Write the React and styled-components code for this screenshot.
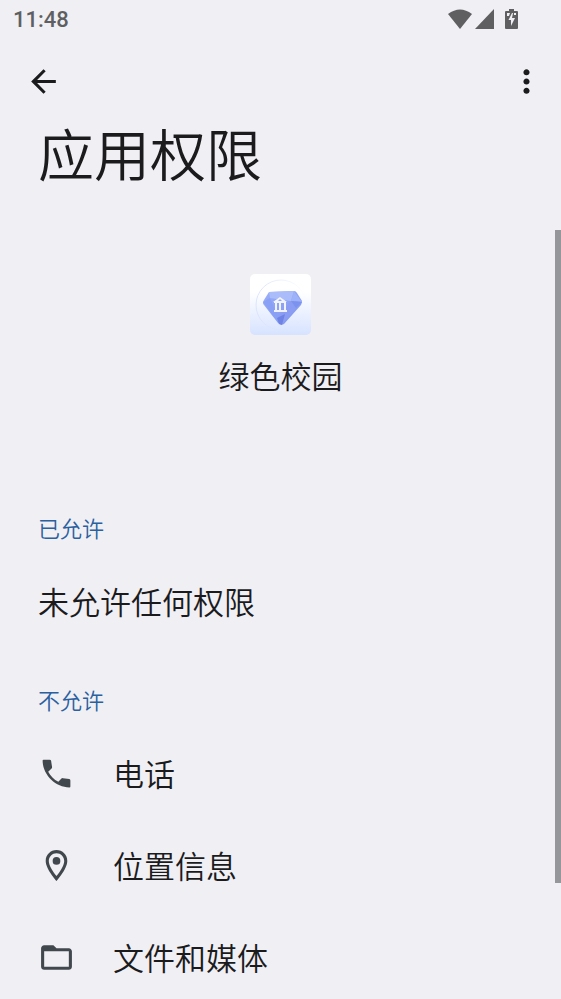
import React from "react";
import styled, { createGlobalStyle } from "styled-components";

const GlobalStyle = createGlobalStyle`
  * { box-sizing: border-box; }
  body {
    margin: 0;
    background: #f0eff4;
    color: #1b1b1d;
    font-family: "Noto Sans CJK SC", "Noto Sans", sans-serif;
    font-weight: 350;
  }
`;

const Screen = styled.div`
  position: relative;
  height: 100vh;
  display: flex;
  flex-direction: column;
  overflow: hidden;
`;

const StatusBar = styled.div`
  flex: none;
  display: flex;
  align-items: center;
  justify-content: space-between;
  height: 38px;
  padding: 0 43px 0 13px;
  color: #5f5f62;
`;

const Clock = styled.time`
  font: 500 22px/38px Roboto, sans-serif;
  padding-top: 2px;
`;

const StatusIcons = styled.div`
  display: flex;
  align-items: center;
  gap: 3px;

  svg { display: block; fill: currentColor; }
  svg:last-child { margin-left: 8px; }
`;

const Toolbar = styled.header`
  flex: none;
  display: flex;
  align-items: center;
  justify-content: space-between;
  height: 73px;
  padding: 13px 11px 0 19px;
`;

const IconButton = styled.button`
  display: grid;
  place-items: center;
  width: 48px;
  height: 48px;
  padding: 0;
  border: 0;
  border-radius: 50%;
  background: none;
  color: #1b1b1d;
  cursor: pointer;
`;

const Glyph = styled.svg`
  display: block;
  flex: none;
  width: 37px;
  height: 37px;
  fill: currentColor;
`;

const Content = styled.main`
  flex: 1;
  min-height: 0;
  overflow-y: auto;
  scrollbar-width: none;
`;

const Title = styled.h1`
  margin: 0;
  padding: 0 38px;
  font-size: 56px;
  line-height: 82px;
  font-weight: inherit;
`;

const AppHeader = styled.section`
  display: flex;
  flex-direction: column;
  align-items: center;
  gap: 20px;
  padding: 81px 38px 92px;
`;

const AppIcon = styled.svg`
  display: block;
  width: 61px;
  height: 61px;
`;

const AppName = styled.h2`
  margin: 0;
  font-size: 31px;
  line-height: 40px;
  font-weight: inherit;
`;

const SectionTitle = styled.h3`
  margin: 0;
  padding: 20px 38px 0;
  font-size: 22px;
  line-height: 40px;
  font-weight: inherit;
  color: #2a60a0;
`;

const Group = styled.section`
  padding-bottom: 12px;
`;

const List = styled.ul`
  margin: 0;
  padding: 8px 0 0;
  list-style: none;
`;

const Row = styled.li`
  display: flex;
  align-items: center;
  height: 92px;
`;

const Label = styled.span`
  padding: 0 38px;
  font-size: 31px;
  line-height: 40px;
`;

const RowButton = styled.button`
  display: flex;
  align-items: center;
  width: 100%;
  height: 100%;
  padding: 0 0 0 38px;
  border: 0;
  background: none;
  color: #1b1b1d;
  font-family: inherit;
  font-weight: inherit;
  text-align: left;
  cursor: pointer;

  ${Glyph} { color: #41484d; }
`;

const ScrollThumb = styled.div`
  position: absolute;
  top: 23%;
  right: 0;
  width: 6px;
  height: 65.4%;
  background: #949699;
`;

const paths = {
  back: "M20 11H7.83l5.59-5.59L12 4l-8 8 8 8 1.41-1.41L7.83 13H20v-2z",
  more: "M12 8c1.1 0 2-.9 2-2s-.9-2-2-2-2 .9-2 2 .9 2 2 2zm0 2c-1.1 0-2 .9-2 2s.9 2 2 2 2-.9 2-2-.9-2-2-2zm0 6c-1.1 0-2 .9-2 2s.9 2 2 2 2-.9 2-2-.9-2-2-2z",
  phone: "M3.6 3H7.500Q8.400 3 8.500 3.800L9.100 7.700Q9.200 8.400 8.800 8.700L6.620 10.800C8.060 13.600 10.400 15.900 13.200 17.400L15.200 15.300Q15.600 14.900 16.200 15L20.300 15.600Q21 15.700 21 16.500V20.400Q21 21 20.400 21C11.300 21 3 12.700 3 3.600Q3 3 3.600 3Z",
  place: "M12 2C8.13 2 5 5.13 5 9c0 5.25 7 13 7 13s7-7.75 7-13c0-3.87-3.13-7-7-7zM7 9c0-2.76 2.24-5 5-5s5 2.24 5 5c0 2.88-2.88 7.19-5 9.88C9.92 16.21 7 11.85 7 9zM12 6.5a2.5 2.5 0 1 0 0 5 2.5 2.5 0 0 0 0-5z",
  folder: "M20 6h-8l-2-2H4c-1.1 0-2 .9-2 2v12c0 1.1.9 2 2 2h16c1.1 0 2-.9 2-2V8c0-1.1-.9-2-2-2zm0 12H4V8h16v10z",
};

const Icon = ({ name }) => (
  <Glyph viewBox="0 0 24 24" aria-hidden="true">
    <path d={paths[name]} />
  </Glyph>
);

const DiamondIcon = () => (
  <AppIcon viewBox="0 0 61 61" role="img" aria-label="绿色校园">
    <defs>
      <linearGradient id="tile" x1="0" y1="0" x2="0" y2="1">
        <stop offset="0.3" stopColor="#ffffff" />
        <stop offset="1" stopColor="#d6e2ff" />
      </linearGradient>
      <linearGradient id="ring" x1="0" y1="0" x2="1" y2="0">
        <stop offset="0" stopColor="#dbe4fd" />
        <stop offset="1" stopColor="#dbe4fd" stopOpacity="0" />
      </linearGradient>
      <linearGradient id="gem" x1="0" y1="0" x2="1" y2="1">
        <stop offset="0" stopColor="#9aaef8" />
        <stop offset="1" stopColor="#7f95ee" />
      </linearGradient>
    </defs>
    <rect width="61" height="61" rx="5" fill="url(#tile)" />
    <circle cx="31" cy="31" r="25" fill="none" stroke="url(#ring)" />
    <path d="M19 18 44 17Q46 17 47 19L52 27Q52 29 51 31L34 50Q31 52 28 49L14 31Q12 29 14 26Z" fill="url(#gem)" />
    <path d="M19 18 44 17 41 27 20 24Z" fill="#aabdfa" />
    <path d="M44 17 52 28 41 27Z" fill="#9db2f8" />
    <path d="M41 27 52 28 32 50 28 43Z" fill="#8a9df2" />
    <path d="M41 27 52 28 46 34Z" fill="#7b92ee" />
    <path d="M13 28 20 24 28 43 30 50Z" fill="#8aa0f4" />
    <path d="M27 44 35 40 32 51 29 50Z" fill="#6f83e4" />
    <g fill="#f1f4ff">
      <path fillRule="evenodd" d="M30 23 37 28H23ZM30 25 28 27H32Z" />
      <path d="M24 28h12v1H24zM25 29h2v7h-2zM29 29h2v7h-2zM34 29h2v7h-2zM24 36h13v2H24z" />
    </g>
  </AppIcon>
);

const denied = [
  { icon: "phone", label: "电话" },
  { icon: "place", label: "位置信息" },
  { icon: "folder", label: "文件和媒体" },
];

export default function App() {
  return (
    <>
      <GlobalStyle />
      <Screen>
        <StatusBar>
          <Clock>11:48</Clock>
          <StatusIcons>
            <svg width="24" height="20" viewBox="0 0 24 20" aria-label="Wi-Fi">
              <path d="M0 5Q12-4 24 5L12 20Z" />
            </svg>
            <svg width="19" height="20" viewBox="0 0 19 20" aria-label="Signal">
              <path d="M19 0V20H0Z" />
            </svg>
            <svg width="13" height="20" viewBox="0 0 13 20" aria-label="Battery charging">
              <path fillRule="evenodd" d="M4 0H9V2H12Q13 2 13 3V19Q13 20 12 20H1Q0 20 0 19V3Q0 2 1 2H4ZM2 4V7H4L5 4ZM8 4 7 9H10L6 17V11H3.500L7 4ZM9 4V6H11V4Z" />
            </svg>
          </StatusIcons>
        </StatusBar>
        <Toolbar>
          <IconButton type="button" aria-label="返回"><Icon name="back" /></IconButton>
          <IconButton type="button" aria-label="更多选项"><Icon name="more" /></IconButton>
        </Toolbar>
        <Content>
          <Title>应用权限</Title>
          <AppHeader>
            <DiamondIcon />
            <AppName>绿色校园</AppName>
          </AppHeader>
          <Group>
            <SectionTitle>已允许</SectionTitle>
            <List>
              <Row><Label>未允许任何权限</Label></Row>
            </List>
          </Group>
          <Group>
            <SectionTitle>不允许</SectionTitle>
            <List>
              {denied.map(({ icon, label }) => (
                <Row key={label}>
                  <RowButton type="button">
                    <Icon name={icon} />
                    <Label>{label}</Label>
                  </RowButton>
                </Row>
              ))}
            </List>
          </Group>
        </Content>
        <ScrollThumb />
      </Screen>
    </>
  );
}
